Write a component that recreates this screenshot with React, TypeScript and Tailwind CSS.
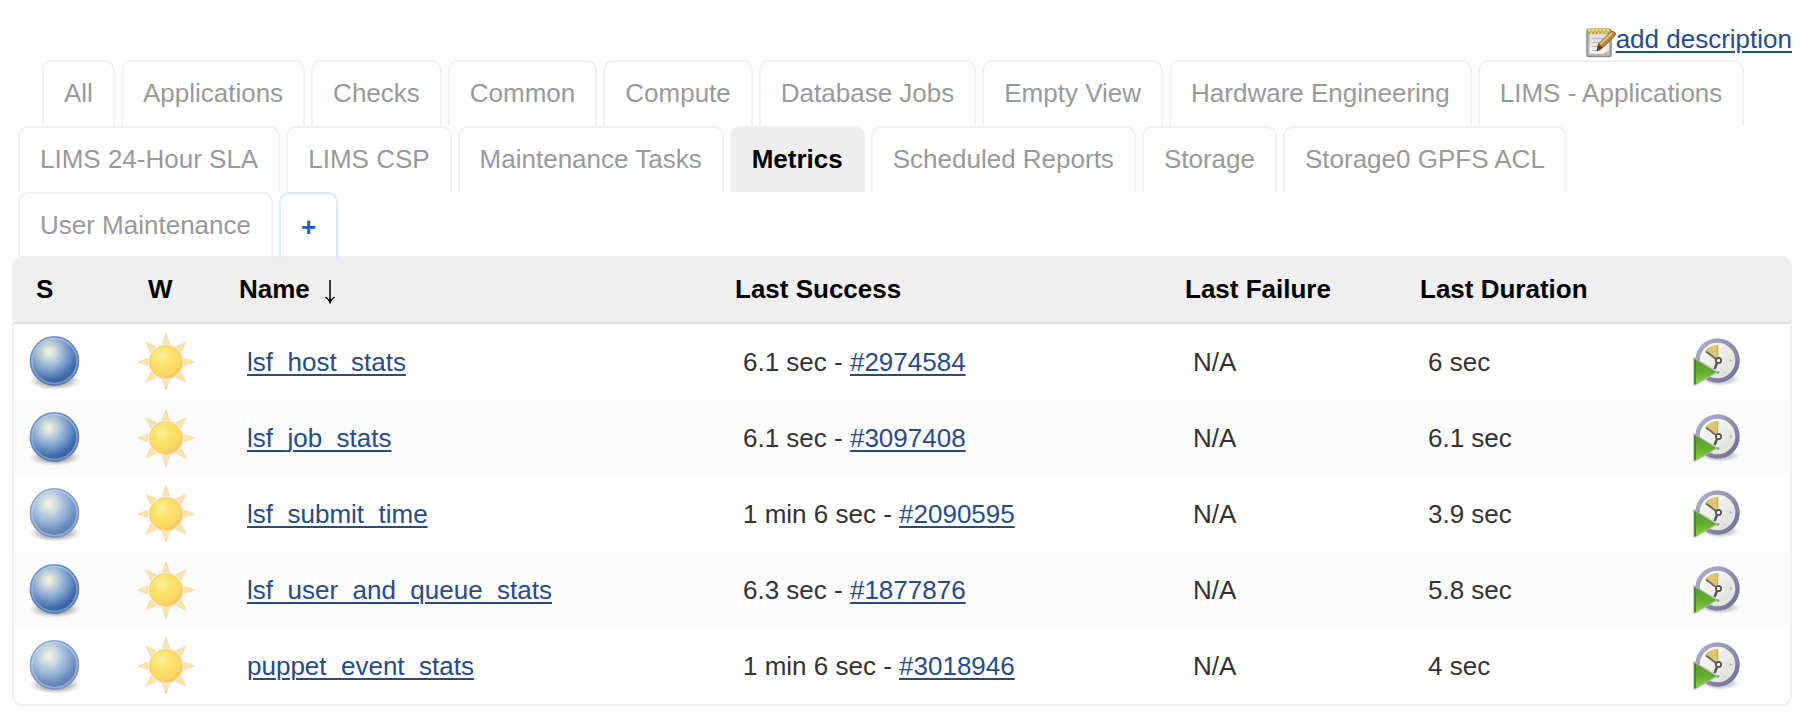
const tabs = [
  'All', 'Applications', 'Checks', 'Common', 'Compute', 'Database Jobs', 'Empty View',
  'Hardware Engineering', 'LIMS - Applications', 'LIMS 24-Hour SLA', 'LIMS CSP',
  'Maintenance Tasks', 'Metrics', 'Scheduled Reports', 'Storage', 'Storage0 GPFS ACL',
  'User Maintenance',
];

const jobs = [
  { name: 'lsf_host_stats', ago: '6.1 sec', build: '#2974584', duration: '6 sec', running: false },
  { name: 'lsf_job_stats', ago: '6.1 sec', build: '#3097408', duration: '6.1 sec', running: false },
  { name: 'lsf_submit_time', ago: '1 min 6 sec', build: '#2090595', duration: '3.9 sec', running: true },
  { name: 'lsf_user_and_queue_stats', ago: '6.3 sec', build: '#1877876', duration: '5.8 sec', running: false },
  { name: 'puppet_event_stats', ago: '1 min 6 sec', build: '#3018946', duration: '4 sec', running: true },
];

function Gradients() {
  return (
    <svg width="0" height="0" className="absolute" aria-hidden="true">
      <defs>
        <radialGradient id="ball" cx="0.39" cy="0.32" r="0.68">
          <stop offset="0" stopColor="#f3f5e0" />
          <stop offset="0.12" stopColor="#dde6dc" />
          <stop offset="0.5" stopColor="#86a7d2" />
          <stop offset="0.85" stopColor="#3f69a9" />
          <stop offset="1" stopColor="#3a62a2" />
        </radialGradient>
        <linearGradient id="rim" x1="0" y1="0" x2="0" y2="1">
          <stop offset="0" stopColor="#c3d3e8" stopOpacity="0.55" />
          <stop offset="1" stopColor="#8fabd4" stopOpacity="0.7" />
        </linearGradient>
        <radialGradient id="shade">
          <stop offset="0" stopColor="#000" stopOpacity="0.5" />
          <stop offset="0.6" stopColor="#000" stopOpacity="0.26" />
          <stop offset="0.85" stopColor="#000" stopOpacity="0.08" />
          <stop offset="1" stopColor="#000" stopOpacity="0" />
        </radialGradient>
        <radialGradient id="sun" cx="0.38" cy="0.32" r="0.75">
          <stop offset="0" stopColor="#fdf09a" />
          <stop offset="0.4" stopColor="#fbe268" />
          <stop offset="0.75" stopColor="#fad764" />
          <stop offset="1" stopColor="#f5b860" />
        </radialGradient>
        <linearGradient id="ring" x1="0" y1="0" x2="1" y2="1">
          <stop offset="0" stopColor="#b2b2cb" />
          <stop offset="1" stopColor="#6f6c94" />
        </linearGradient>
        <linearGradient id="face" x1="0" y1="0" x2="1" y2="1">
          <stop offset="0" stopColor="#ffffff" />
          <stop offset="1" stopColor="#d9dad6" />
        </linearGradient>
        <linearGradient id="play" x1="0" y1="0" x2="0" y2="1">
          <stop offset="0" stopColor="#5c9a3a" />
          <stop offset="0.5" stopColor="#62ad30" />
          <stop offset="1" stopColor="#8fd83f" />
        </linearGradient>
        <linearGradient id="paper" x1="0" y1="0" x2="0" y2="1">
          <stop offset="0" stopColor="#d8d8d6" />
          <stop offset="1" stopColor="#f6f6f6" />
        </linearGradient>
      </defs>
    </svg>
  );
}

function Ball({ running }: { running: boolean }) {
  return (
    <svg width="64" height="64" viewBox="0 0 64 64" role="img" aria-label={running ? 'In progress' : 'Success'}>
      <ellipse cx="33" cy="51" rx="26" ry="9" fill="url(#shade)" opacity="0.9" />
      {running && <circle cx="32.5" cy="31" r="24.5" fill="#fff" />}
      <g opacity={running ? 0.8 : 1}>
        <circle cx="32.5" cy="31" r="24.5" fill="url(#ball)" />
        <circle cx="32.5" cy="31" r="22.6" fill="none" stroke="url(#rim)" strokeWidth="1.8" />
        <circle cx="32.5" cy="31" r="24.2" fill="none" stroke="#6485b8" strokeOpacity="0.8" strokeWidth="1.4" />
      </g>
    </svg>
  );
}

function Sun() {
  return (
    <svg width="64" height="64" viewBox="0 0 64 64" role="img" aria-label="No recent builds failed">
      {[0, 45, 90, 135, 180, 225, 270, 315].map((a) => (
        <path
          key={a}
          d="M32 4 L35.5 14 Q32 12.5 28.5 14 Z"
          transform={`rotate(${a} 32 32)`}
          fill="#fbe7a2"
          stroke="#f9d8b0"
          strokeOpacity="0.8"
          strokeWidth="1.4"
          strokeLinejoin="round"
        />
      ))}
      <circle cx="32" cy="32" r="17.6" fill="#fce9c6" />
      <circle cx="32" cy="32" r="16.4" fill="url(#sun)" stroke="#f9d27e" strokeWidth="1" />
    </svg>
  );
}

function Clock() {
  return (
    <svg width="48" height="48" viewBox="0 0 48 48" aria-hidden="true">
      <ellipse cx="28" cy="41" rx="20" ry="7" fill="url(#shade)" opacity="0.7" />
      <circle cx="25.5" cy="22.5" r="20" fill="url(#face)" stroke="url(#ring)" strokeWidth="4.4" />
      <path d="M24.5 20 L13 13 Q18 7 25.5 7 Z" fill="#ddc670" />
      <path d="M25.5 7 V19" stroke="#cdb14f" strokeWidth="1.5" />
      <path d="M14 13.5 L24 21" stroke="#66665e" strokeWidth="1.8" />
      <path d="M25.5 24 L22.5 31" stroke="#55554e" strokeWidth="2.4" />
      <circle cx="26.5" cy="22.5" r="2.6" fill="#f2f2f0" stroke="#55554e" strokeWidth="1.8" />
      <circle cx="39" cy="22.5" r="1.3" fill="#b9bab5" />
      <circle cx="26" cy="34.5" r="1.3" fill="#8b8d86" />
      <path d="M2 20 L25 34 L2 47.5 Z" fill="url(#play)" stroke="#a5b898" strokeWidth="1.2" />
      <path d="M3 21.5 V46" stroke="#47842a" strokeWidth="2" />
    </svg>
  );
}

function Notepad() {
  return (
    <svg width="30" height="32" viewBox="0 0 30 32" aria-hidden="true">
      <rect x="1" y="3.5" width="24" height="27" rx="1.5" fill="#b9b9b5" stroke="#8e8e8a" strokeWidth="1.5" />
      <path d="M3.5 6 H23 V24 L18 27.5 H3.5 Z" fill="url(#paper)" />
      <path d="M6 12.5 H20 M6 16.5 H16 M6 20.5 H13 M6 24.5 H11" stroke="#b8b8b6" strokeWidth="1.2" />
      <path d="M2 5 H23" stroke="#c9a436" strokeWidth="6" strokeDasharray="2.6 1.1" />
      <path d="M2 4 H23" stroke="#efd976" strokeWidth="3" strokeDasharray="2.6 1.1" />
      <path d="M11.5 25 L12.5 18 L24.5 6 Q27.5 4.5 29.5 7 Q29.5 9.5 28 10.5 L17 21.5 Z" fill="#b5853f" stroke="#7d5a28" strokeWidth="1" />
      <path d="M14.5 18 L26 7" stroke="#e3c48c" strokeWidth="2" />
      <path d="M10.5 25.5 L12 18.5 L17 21.5 Z" fill="#54432c" />
    </svg>
  );
}

const link = 'text-[#274b88] underline decoration-2 underline-offset-[3px]';
const head = 'border-b-2 border-[#ddd] pb-[3px] pl-[22px]';

export default function App() {
  return (
    <main className="bg-white pt-6 pr-[18px] pb-3 pl-3 font-['Liberation_Sans',Arial,sans-serif] text-[26px] leading-[30px] text-[#333]">
      <Gradients />
      <div className="flex justify-end">
        <a href="#description" className="flex h-9 items-start text-[#274b88]">
          <span className="pt-[2px]"><Notepad /></span>
          <span className={link}>add description</span>
        </a>
      </div>

      <nav aria-label="Views" className="flex flex-wrap gap-x-1.5 px-1.5">
        {tabs.map((tab) => {
          const active = tab === 'Metrics';
          return (
            <a
              key={tab}
              href="#view"
              aria-current={active ? 'page' : undefined}
              className={`h-[66px] rounded-t-[10px] border-2 border-b-0 border-[#f0f0f0] px-5 pt-4 whitespace-nowrap first:ml-6 ${
                active ? 'bg-[#eee] font-bold text-black' : 'text-[#999]'
              }`}
            >
              {tab}
            </a>
          );
        })}
        <a
          href="#new-view"
          aria-label="New View"
          className="h-[66px] rounded-t-[10px] border-2 border-b-0 border-[#d9ebff] px-5 pt-[18px] font-bold text-[#1f5ac8]"
        >
          +
        </a>
      </nav>

      <div className="-mt-[2px] overflow-hidden rounded-[10px] border-2 border-[#efefef]">
        <table className="w-full border-separate border-spacing-0 text-left">
          <thead>
            <tr className="h-[66px] bg-[#efefef] text-black">
              <th className={`w-28 ${head}`}>S</th>
              <th className={`w-[91px] ${head}`}>W</th>
              <th className={`w-[496px] ${head}`}>
                <a href="#sort" className="flex items-center gap-3.5">
                  Name
                  <svg width="12" height="24" viewBox="0 0 12 24" fill="none" stroke="#000" strokeWidth="1.5" aria-hidden="true" className="mt-1.5">
                    <path d="M6 0 V22 M1.5 17 Q4.5 19 6 22.5 Q7.5 19 10.5 17" />
                  </svg>
                </a>
              </th>
              <th className={`w-[450px] ${head}`}>Last Success</th>
              <th className={`w-[235px] ${head}`}>Last Failure</th>
              <th className={`w-[235px] ${head}`}>Last Duration</th>
              <th className={head} aria-label="Actions" />
            </tr>
          </thead>
          <tbody>
            {jobs.map((job) => (
              <tr key={job.name} className="h-[76px] even:bg-[#fbfbfb]">
                <td className="pl-2"><span className="flex"><Ball running={job.running} /></span></td>
                <td className="pl-2"><span className="flex"><Sun /></span></td>
                <td className="pl-[30px]"><a href="#job" className={link}>{job.name}</a></td>
                <td className="pl-[30px]">{job.ago} - <a href="#build" className={link}>{job.build}</a></td>
                <td className="pl-[30px]">N/A</td>
                <td className="pl-[30px]">{job.duration}</td>
                <td className="pr-[50px]">
                  <button type="button" aria-label={`Schedule a build for ${job.name}`} className="ml-auto flex">
                    <Clock />
                  </button>
                </td>
              </tr>
            ))}
          </tbody>
        </table>
      </div>
    </main>
  );
}
